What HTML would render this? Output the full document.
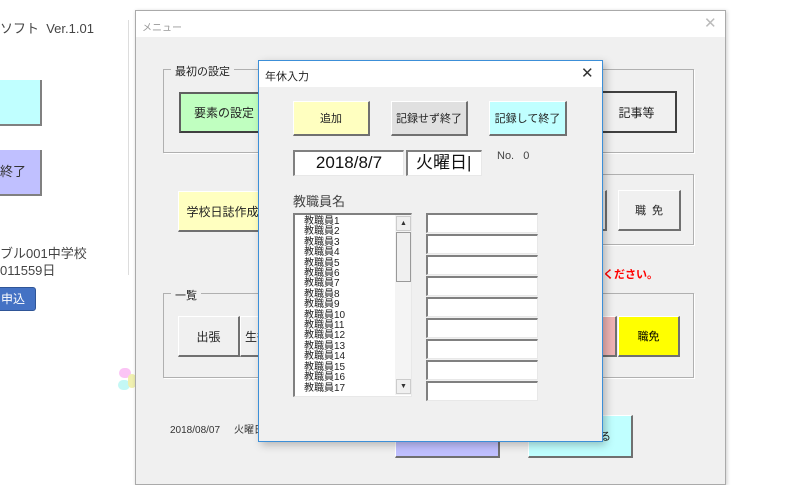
<!DOCTYPE html>
<html><head><meta charset="utf-8"><style>
*{box-sizing:border-box;margin:0;padding:0}
body{width:800px;height:480px;position:relative;overflow:hidden;background:#fff;font-family:"Liberation Sans","Noto Sans CJK JP",sans-serif;color:#333}
.a{position:absolute}
.b3{border-style:solid;border-width:1px 2px 2px 1px;border-color:#fff #707070 #707070 #fff;text-align:center;font-size:11px;color:#222;display:flex;align-items:center;justify-content:center;white-space:nowrap;overflow:hidden}
.box{position:absolute;border:1px solid #b0b0b0;box-shadow:1px 1px 0 #fff}
.lg{position:absolute;background:#f0f0f0;font-size:11px;padding:0 4px;color:#222}
.tb{position:absolute;background:#fff;border-style:solid;border-width:2px 1px 1px 2px;border-color:#808080 #e8e8e8 #e8e8e8 #808080}
</style></head><body>
<div class="a" style="left:0;top:18px;font-size:13px;color:#444">ソフト&nbsp; Ver.1.01</div>
<div class="a" style="left:-10px;top:80px;width:52px;height:46px;background:#c0ffff;border-right:2px solid #808080;border-bottom:2px solid #808080;font-size:13px;line-height:44px;padding-left:10px"></div>
<div class="a" style="left:-10px;top:150px;width:52px;height:46px;background:#c0c0ff;border-right:2px solid #808080;border-bottom:2px solid #808080;font-size:13px;line-height:44px;padding-left:10px">終了</div>
<div class="a" style="left:0;top:245px;font-size:13px;line-height:17px;color:#444">ブル001中学校<br>011559日</div>
<div class="a" style="left:-8px;top:287px;width:44px;height:24px;background:#4472c4;border:1px solid #2f5597;border-radius:3px;color:#fff;font-size:12px;line-height:22px;padding-left:8px">申込</div>
<div class="a" style="left:118px;top:368px;width:18px;height:28px;"><div class="a" style="left:1px;top:0;width:12px;height:10px;background:#fbc4f5;border-radius:6px"></div><div class="a" style="left:0;top:12px;width:12px;height:10px;background:#c4f8f5;border-radius:6px"></div><div class="a" style="left:10px;top:6px;width:8px;height:14px;background:#f0f0b0;border-radius:5px"></div></div>
<div class="a" style="left:128px;top:20px;width:8px;height:255px;border-left:1px solid #ddd;border-right:1px solid #ccc"></div>
<div class="a" style="left:135px;top:10px;width:591px;height:475px;background:#f0f0f0;border:1px solid #aaa;box-shadow:1px 1px 4px rgba(0,0,0,.2)">
<div class="a" style="left:0;top:0;width:589px;height:26px;background:#fff;font-size:10px;color:#999;padding:8px 6px">メニュー</div>
<div class="a" style="left:568px;top:3px;font-size:15px;color:#bbb;font-weight:200">✕</div>
</div>
<div class="box" style="left:163px;top:69px;width:531px;height:84px"></div>
<div class="lg" style="left:171px;top:63px">最初の設定</div>
<div class="a b3" style="left:179px;top:92px;width:90px;height:41px;background:#c0ffc0;border:2px solid #404040;border-top-color:#606060;border-left-color:#606060;font-size:12px">要素の設定</div>
<div class="a b3" style="left:596px;top:91px;width:81px;height:42px;background:#f0f0f0;border:2px solid #404040;font-size:12px">記事等</div>
<div class="box" style="left:596px;top:174px;width:98px;height:71px"></div>
<div class="a b3" style="left:178px;top:191px;width:90px;height:41px;background:#ffffc0;font-size:12px">学校日誌作成</div>
<div class="a b3" style="left:590px;top:190px;width:17px;height:41px;background:#f0f0f0"></div>
<div class="a b3" style="left:618px;top:190px;width:63px;height:41px;background:#f0f0f0">職&nbsp; 免</div>
<div class="a" style="left:603px;top:266px;font-size:11px;color:#f00;font-weight:bold">ください。</div>
<div class="box" style="left:163px;top:293px;width:531px;height:85px"></div>
<div class="lg" style="left:171px;top:287px">一覧</div>
<div class="a b3" style="left:178px;top:316px;width:62px;height:41px;background:#f0f0f0;font-size:12px">出張</div>
<div class="a b3" style="left:240px;top:316px;width:30px;height:41px;background:#f0f0f0;font-size:12px;justify-content:flex-start;padding-left:4px">生徒</div>
<div class="a b3" style="left:596px;top:316px;width:21px;height:41px;background:#f0b4b4"></div>
<div class="a b3" style="left:618px;top:316px;width:62px;height:41px;background:#ffff00;color:#000">職免</div>
<div class="a" style="left:170px;top:421px;font-size:10px;color:#333">2018/08/07&nbsp;&nbsp;&nbsp;&nbsp; 火曜日</div>
<div class="a b3" style="left:395px;top:415px;width:105px;height:43px;background:#c0c0ff"></div>
<div class="a b3" style="left:528px;top:415px;width:105px;height:43px;background:#c0ffff;justify-content:flex-end;padding-right:20px">る</div>
<div class="a" style="left:258px;top:60px;width:345px;height:382px;background:#f0f0f0;border:1px solid #3c8fd8;box-shadow:3px 3px 8px rgba(0,0,0,.25)">
<div class="a" style="left:0;top:0;width:343px;height:26px;background:#fff;font-size:11px;color:#222;padding:7px 6px">年休入力</div>
<div class="a" style="left:322px;top:3px;font-size:15px;color:#333">✕</div>
</div>
<div class="a b3" style="left:293px;top:101px;width:77px;height:35px;background:#ffffc0">追加</div>
<div class="a b3" style="left:391px;top:101px;width:77px;height:35px;background:#e0e0e0">記録せず終了</div>
<div class="a b3" style="left:489px;top:101px;width:78px;height:35px;background:#c0ffff">記録して終了</div>
<div class="tb" style="left:293px;top:150px;width:111px;height:26px;font-size:17px;color:#111;text-align:center;line-height:22px">2018/8/7</div>
<div class="tb" style="left:406px;top:150px;width:76px;height:26px;font-size:17px;color:#111;padding-left:8px;line-height:22px">火曜日|</div>
<div class="a" style="left:497px;top:150px;font-size:11px;color:#444">No.&nbsp;&nbsp; 0</div>
<div class="a" style="left:293px;top:191px;font-size:13px;color:#444">教職員名</div>
<div class="tb" style="left:293px;top:213px;width:119px;height:184px;overflow:hidden">
<div class="a" style="left:9px;top:2px;font-size:10px;line-height:10.4px;color:#222">教職員1<br>教職員2<br>教職員3<br>教職員4<br>教職員5<br>教職員6<br>教職員7<br>教職員8<br>教職員9<br>教職員10<br>教職員11<br>教職員12<br>教職員13<br>教職員14<br>教職員15<br>教職員16<br>教職員17</div>
<div class="a" style="left:100px;top:0;width:16px;height:180px;background:#f4f4f4"></div>
<div class="a" style="left:101px;top:1px;width:15px;height:15px;background:#f0f0f0;border:1px solid #ccc;font-size:7px;text-align:center;line-height:13px">▲</div>
<div class="a" style="left:101px;top:17px;width:15px;height:50px;background:#f0f0f0;border:1px solid #999"></div>
<div class="a" style="left:101px;top:164px;width:15px;height:15px;background:#f0f0f0;border:1px solid #ccc;font-size:7px;text-align:center;line-height:13px">▼</div>
</div>
<div class="tb" style="left:426px;top:213px;width:112px;height:20px"></div>
<div class="tb" style="left:426px;top:234px;width:112px;height:20px"></div>
<div class="tb" style="left:426px;top:255px;width:112px;height:20px"></div>
<div class="tb" style="left:426px;top:276px;width:112px;height:20px"></div>
<div class="tb" style="left:426px;top:297px;width:112px;height:20px"></div>
<div class="tb" style="left:426px;top:318px;width:112px;height:20px"></div>
<div class="tb" style="left:426px;top:339px;width:112px;height:20px"></div>
<div class="tb" style="left:426px;top:360px;width:112px;height:20px"></div>
<div class="tb" style="left:426px;top:381px;width:112px;height:20px"></div>
</body></html>
